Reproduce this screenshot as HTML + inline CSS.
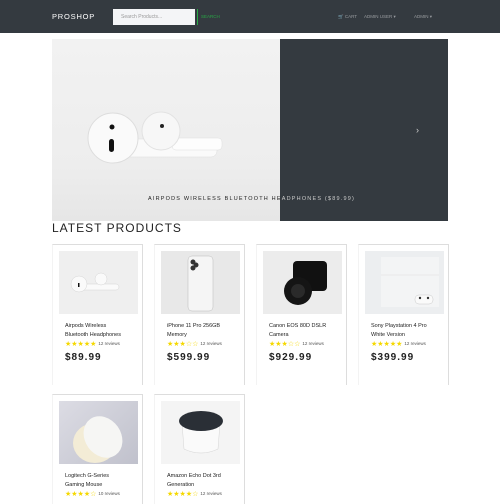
<!DOCTYPE html>
<html><head><style>
*{margin:0;padding:0;box-sizing:border-box}
body{width:500px;height:500px;overflow:hidden;background:#fff;font-family:"Liberation Sans",sans-serif;position:relative}
.hdr{position:absolute;left:0;top:0;width:500px;height:33px;background:#343a40}
.logo{position:absolute;left:52px;top:12px;color:#fff;font-size:7.5px;letter-spacing:.8px}
.search{position:absolute;left:113px;top:9px;width:82px;height:16px;background:#f4f5f7;font-size:5px;color:#999;padding:5px 8px}
.sbtn{position:absolute;left:197px;top:9px;width:1px;height:16px;background:#28a745}
.stxt{position:absolute;left:201px;top:14px;font-size:4.5px;color:#28a745}
.nav{position:absolute;top:14px;font-size:4.5px;color:#9a9da1}
.car{position:absolute;left:52px;top:39px;width:396px;height:182px;background:#343a40}
.carimg{position:absolute;left:0;top:0;width:228px;height:182px;background:linear-gradient(180deg,#f2f2f2,#ededed 70%,#e6e6e6)}
.cap{position:absolute;left:96px;top:157px;font-size:5.5px;letter-spacing:1.2px;color:#222;white-space:nowrap}
.cap span{color:#ccc}
h2{position:absolute;left:52px;top:221px;font-size:12px;font-weight:normal;letter-spacing:1px;color:#222}
.card{position:absolute;width:91px;border-top:1px solid #ddd;border-right:1px solid #ddd;border-left:1px solid #f3f3f3}
.img{position:absolute;left:6px;top:6px;width:79px;height:63px;background:#eee;overflow:hidden}
.t{position:absolute;left:12px;top:77px;font-size:5.5px;line-height:9px;color:#222;width:64px}
.st{position:absolute;left:12px;top:95px;font-size:7px;color:#f5d800;white-space:nowrap}
.st span{color:#555;font-size:4.5px;vertical-align:1px}
.p{position:absolute;left:12px;top:107px;font-size:10px;font-weight:bold;color:#222;letter-spacing:1px}
</style></head><body>
<div class="hdr">
<div class="logo">PROSHOP</div>
<div class="search">Search Products...</div>
<div class="sbtn"></div><div class="stxt">SEARCH</div>
<div class="nav" style="left:338px">🛒 CART</div>
<div class="nav" style="left:364px">ADMIN USER ▾</div>
<div class="nav" style="left:414px">ADMIN ▾</div>
</div>
<div class="car">
<div class="carimg">
<svg width="228" height="182" style="position:absolute;left:0;top:0">
<rect x="70" y="100" width="95" height="18" rx="6" fill="#fafafa" stroke="#ddd" stroke-width=".5"/>
<rect x="120" y="99" width="50" height="12" rx="4" fill="#fdfdfd" stroke="#ddd" stroke-width=".5"/>
<circle cx="109" cy="92" r="19" fill="#f7f7f7" stroke="#e2e2e2"/>
<circle cx="61" cy="99" r="25" fill="#fafafa" stroke="#ddd"/>
<circle cx="60" cy="88" r="2.5" fill="#111"/>
<rect x="57" y="100" width="5" height="13" rx="2.5" fill="#111"/>
<circle cx="110" cy="87" r="2" fill="#222"/>
</svg>
</div>
<div style="position:absolute;left:364px;top:86px;color:#ccc;font-size:9px">›</div>
<div class="cap">AIRPODS WIRELESS BLUETOOTH HE<span>ADPHONES ($89.99)</span></div>
</div>
<h2>LATEST PRODUCTS</h2>

<div class="card" style="left:52px;top:244px;height:141px"><div class="img" style="background:#efefef"><svg width="79" height="63"><rect x="20" y="33" width="40" height="6" rx="3" fill="#fafafa" stroke="#ccc" stroke-width=".4"/><circle cx="42" cy="28" r="6" fill="#fafafa" stroke="#ccc" stroke-width=".4"/><circle cx="20" cy="33" r="8" fill="#fafafa" stroke="#ccc" stroke-width=".4"/><rect x="19" y="32" width="1.5" height="4" fill="#111"/></svg></div><div class="t">Airpods Wireless Bluetooth Headphones</div><div class="st">★★★★★ <span>12 reviews</span></div><div class="p">$89.99</div></div>
<div class="card" style="left:154px;top:244px;height:141px"><div class="img" style="background:#e8e8e8"><svg width="79" height="63"><rect x="27" y="5" width="25" height="55" rx="4" fill="#f5f5f5" stroke="#bbb" stroke-width=".5"/><circle cx="32" cy="11" r="2.5" fill="#333"/><circle cx="35" cy="14" r="2.5" fill="#333"/><circle cx="32" cy="17" r="2.5" fill="#333"/></svg></div><div class="t">iPhone 11 Pro 256GB Memory</div><div class="st">★★★☆☆ <span>12 reviews</span></div><div class="p">$599.99</div></div>
<div class="card" style="left:256px;top:244px;height:141px"><div class="img" style="background:#ececec"><svg width="79" height="63"><rect x="30" y="10" width="34" height="30" rx="4" fill="#111"/><circle cx="35" cy="40" r="14" fill="#151515"/><circle cx="35" cy="40" r="7" fill="#2a2a2a"/></svg></div><div class="t">Canon EOS 80D DSLR Camera</div><div class="st">★★★☆☆ <span>12 reviews</span></div><div class="p">$929.99</div></div>
<div class="card" style="left:358px;top:244px;height:141px"><div class="img" style="background:#eceef0"><svg width="79" height="63"><rect x="16" y="6" width="58" height="50" fill="#f3f4f5"/><line x1="16" y1="24" x2="74" y2="24" stroke="#ddd" stroke-width=".5"/><rect x="50" y="44" width="18" height="9" rx="4" fill="#fafafa" stroke="#bbb" stroke-width=".4"/><circle cx="55" cy="47" r="1.2" fill="#333"/><circle cx="63" cy="47" r="1.2" fill="#333"/></svg></div><div class="t">Sony Playstation 4 Pro White Version</div><div class="st">★★★★★ <span>12 reviews</span></div><div class="p">$399.99</div></div>

<div class="card" style="left:52px;top:394px;height:110px"><div class="img" style="background:linear-gradient(135deg,#dcdce4,#c0c1cc)"><svg width="79" height="63"><ellipse cx="36" cy="42" rx="22" ry="20" fill="#f3ecd6"/><ellipse cx="44" cy="36" rx="18" ry="22" fill="#f6f6f4" transform="rotate(-35 44 36)"/></svg></div><div class="t">Logitech G-Series Gaming Mouse</div><div class="st">★★★★☆ <span>10 reviews</span></div></div>
<div class="card" style="left:154px;top:394px;height:110px"><div class="img" style="background:#f4f4f4"><svg width="79" height="63"><path d="M21 22 L23 48 Q40 56 57 48 L59 22 Z" fill="#fafafa" stroke="#ccc" stroke-width=".4"/><ellipse cx="40" cy="20" rx="22" ry="10" fill="#2a2f36"/></svg></div><div class="t">Amazon Echo Dot 3rd Generation</div><div class="st">★★★★☆ <span>12 reviews</span></div></div>
</body></html>
